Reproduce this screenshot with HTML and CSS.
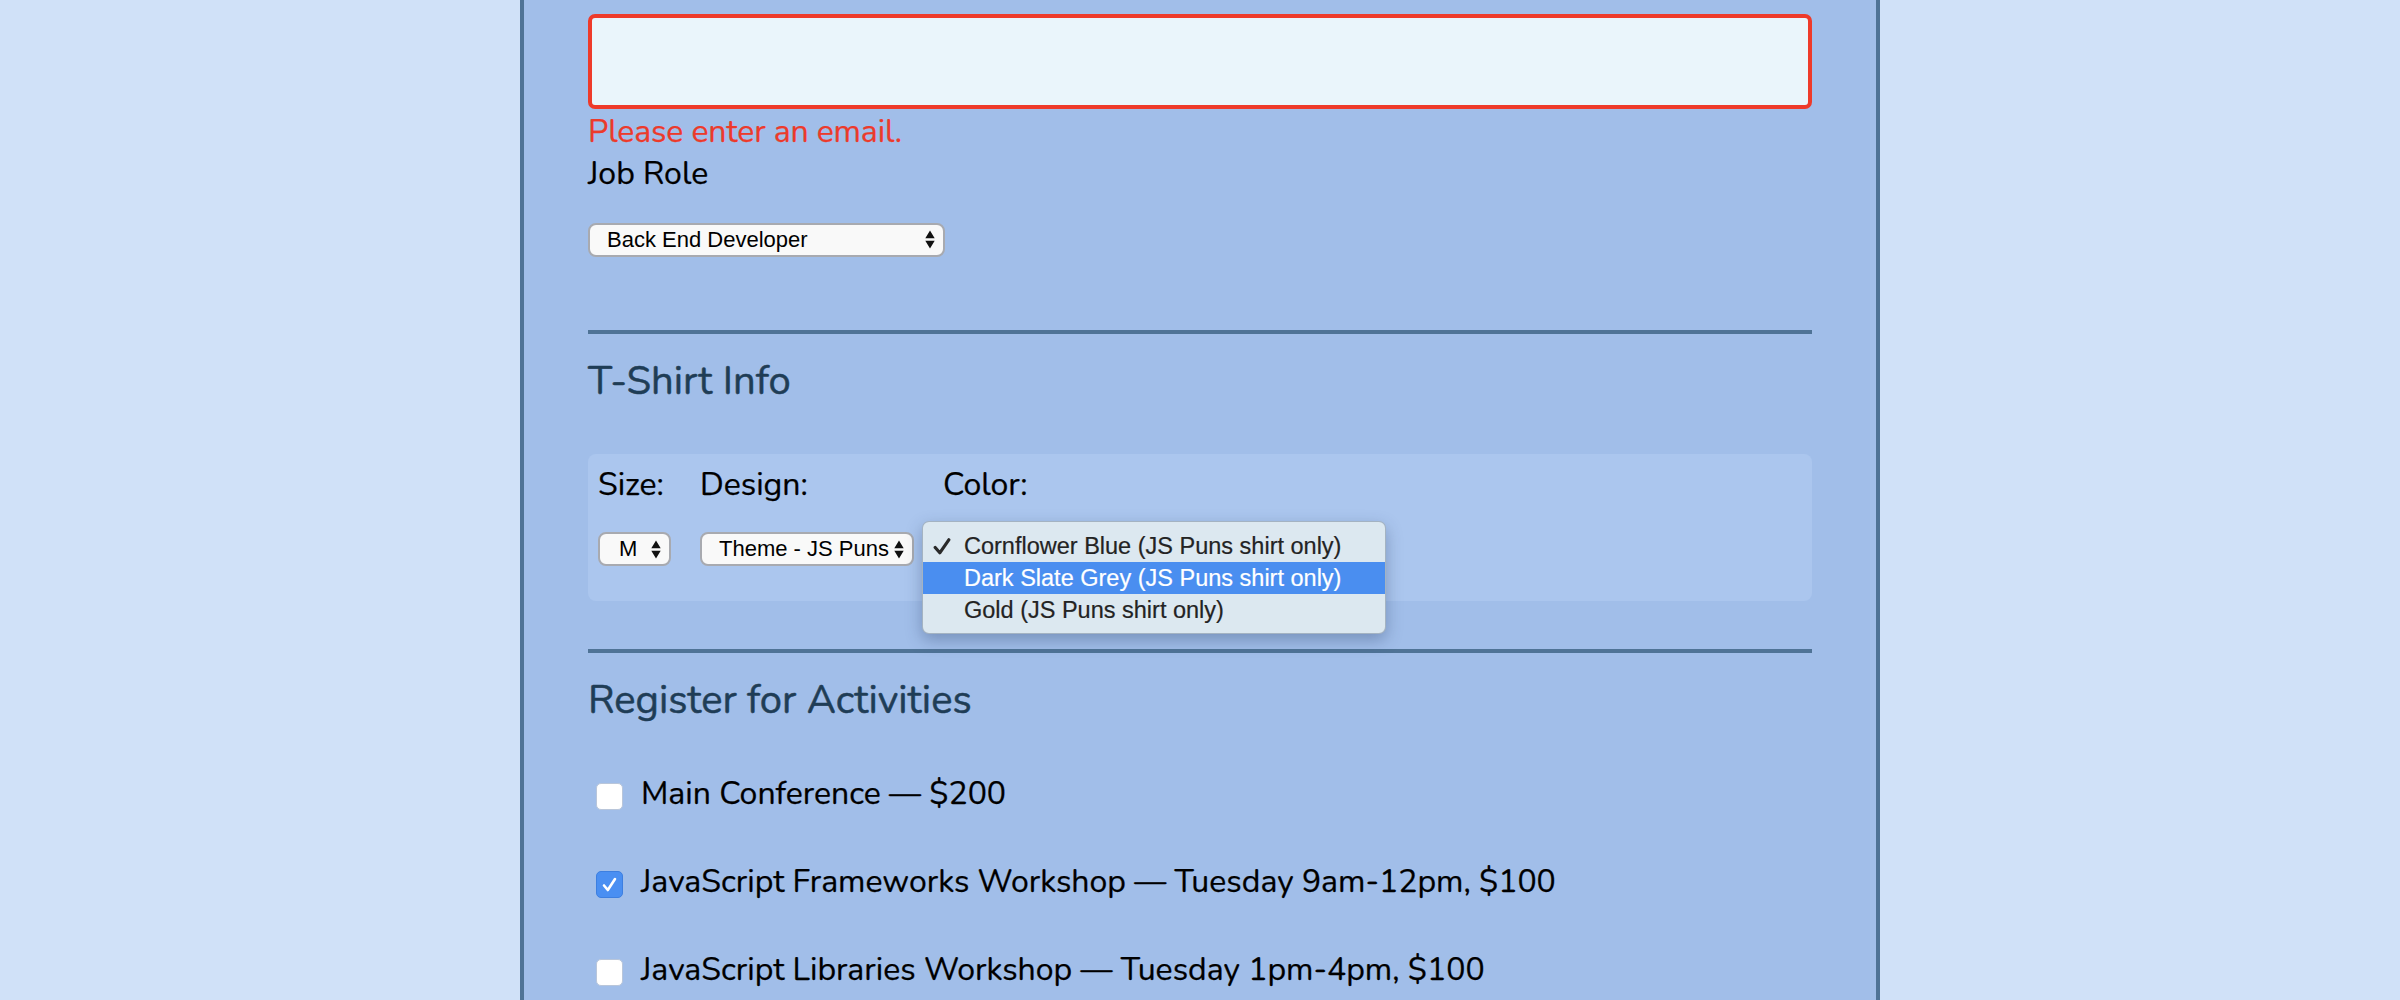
FILE: index.html
```html
<!DOCTYPE html>
<html lang="en">
<head>
<meta charset="utf-8">
<title>Registration</title>
<link rel="stylesheet" href="styles.css">
</head>
<body>
<main class="panel">
  <div class="email-input" aria-label="Email"></div>
  <p class="error">Please enter an email.</p>
  <div class="label">Job Role</div>
  <div class="select select-job">
    <span>Back End Developer</span>
    <svg class="arrows" width="10" height="19" viewBox="0 0 10 19"><path d="M0.3 8.2 L5 0.6 L9.7 8.2 Z M0.3 10.8 L5 18.4 L9.7 10.8 Z" fill="#111"/></svg>
  </div>

  <hr class="rule">
  <h2 class="heading">T-Shirt Info</h2>
  <div class="shirt-box">
    <div class="col col-size">
      <div class="label">Size:</div>
      <div class="select select-size">
        <span>M</span>
        <svg class="arrows" width="10" height="19" viewBox="0 0 10 19"><path d="M0.3 8.2 L5 0.6 L9.7 8.2 Z M0.3 10.8 L5 18.4 L9.7 10.8 Z" fill="#111"/></svg>
      </div>
    </div>
    <div class="col col-design">
      <div class="label">Design:</div>
      <div class="select select-design">
        <span>Theme - JS Puns</span>
        <svg class="arrows" width="10" height="19" viewBox="0 0 10 19"><path d="M0.3 8.2 L5 0.6 L9.7 8.2 Z M0.3 10.8 L5 18.4 L9.7 10.8 Z" fill="#111"/></svg>
      </div>
    </div>
    <div class="col col-color">
      <div class="label">Color:</div>
      <div class="color-wrap">
        <div class="select select-color"></div>
        <ul class="popup">
          <li class="opt">
            <svg class="check" width="18" height="17" viewBox="0 0 18 17"><path d="M2.2 9.5 L6.8 14.8 L15.8 1.8" fill="none" stroke="#2a2a2a" stroke-width="3.2" stroke-linecap="round" stroke-linejoin="round"/></svg>
            Cornflower Blue (JS Puns shirt only)</li>
          <li class="opt opt-hl">Dark Slate Grey (JS Puns shirt only)</li>
          <li class="opt">Gold (JS Puns shirt only)</li>
        </ul>
      </div>
    </div>
  </div>

  <hr class="rule rule-2">
  <h2 class="heading">Register for Activities</h2>
  <div class="activities">
    <div class="act">
      <span class="box"></span>
      <span>Main Conference — $200</span>
    </div>
    <div class="act">
      <span class="box box-on"><svg width="27" height="27" viewBox="0 0 27 27"><path d="M8 14.5 L11.8 19 L19 8" fill="none" stroke="#fff" stroke-width="2.6" stroke-linecap="round" stroke-linejoin="round"/></svg></span>
      <span>JavaScript Frameworks Workshop — Tuesday 9am-12pm, $100</span>
    </div>
    <div class="act">
      <span class="box"></span>
      <span>JavaScript Libraries Workshop — Tuesday 1pm-4pm, $100</span>
    </div>
  </div>
</main>
</body>
</html>
```
FILE: styles.css
```css
* { box-sizing: border-box; }

html, body {
  margin: 0;
  padding: 0;
  height: 100%;
  overflow: hidden;
}

body {
  background: #d0e1f8;
  font-family: "Nunito", Lato, "Open Sans", sans-serif;
  color: #000;
}

.panel {
  width: 1360px;
  min-height: 1000px;
  margin: 0 auto;
  background: #a1bee9;
  border-left: 4px solid #4f7396;
  border-right: 4px solid #4f7396;
  padding: 14px 64px 40px;
}

.email-input {
  height: 95px;
  width: 100%;
  background: #eaf5fb;
  border: 4px solid #ee3a2a;
  border-radius: 7px;
}

.error {
  margin: 4px 0 0;
  font-size: 32px;
  line-height: 1.2;
  color: #ec3a2b;
  letter-spacing: -0.12px;
  -webkit-text-stroke: 0.25px #ec3a2b;
}

.label {
  font-size: 32px;
  line-height: 1.2;
  color: #000;
  -webkit-text-stroke: 0.25px #000;
}

.panel > .label {
  margin-top: 4px;
}

.select {
  height: 34px;
  display: flex;
  align-items: center;
  justify-content: space-between;
  background: #f9f9f9;
  border: 2px solid #a8aab0;
  border-radius: 8px;
  padding: 0 8px 0 17px;
  font-family: "Liberation Sans", Arial, sans-serif;
  font-size: 22px;
  color: #000;
  white-space: nowrap;
}

.select-job {
  width: 357px;
  margin-top: 29px;
}

.select-size { width: 73px; margin-top: 28px; padding-left: 19px; }
.select-design { width: 214px; margin-top: 28px; }
.select-color { width: 300px; margin-top: 28px; }

.arrows { flex: none; }

.rule {
  margin: 73px 0 0;
  height: 4px;
  border: none;
  background: #4f7396;
}

.rule-2 { margin-top: 48px; }

.heading {
  margin: 23px 0 0;
  font-size: 40px;
  line-height: 48px;
  font-weight: 400;
  color: #1f3d56;
  -webkit-text-stroke: 0.5px #1f3d56;
}

.shirt-box {
  margin-top: 49px;
  background: #abc6ee;
  border-radius: 8px;
  padding: 12px 10px 35px;
  display: flex;
  gap: 29px;
}

.col-size { width: 73px; }
.col-design { width: 214px; }

.color-wrap {
  position: relative;
}

.popup {
  position: absolute;
  top: -11px;
  left: -21px;
  width: 464px;
  margin: 0;
  padding: 8px 0 7px;
  list-style: none;
  background: #dce8f0;
  border: 1px solid rgba(60, 80, 110, 0.35);
  border-radius: 7px;
  box-shadow: 0 6px 16px rgba(40, 60, 100, 0.35);
  font-family: "Liberation Sans", Arial, sans-serif;
  font-size: 23.5px;
  color: #232323;
  -webkit-text-stroke: 0.2px currentColor;
}

.opt {
  position: relative;
  height: 32px;
  line-height: 32px;
  padding-left: 41px;
  white-space: nowrap;
}

.opt-hl {
  background: #4a8ef0;
  color: #fff;
}

.check {
  position: absolute;
  left: 10px;
  top: 8px;
}

.activities {
  margin-top: 51px;
  display: flex;
  flex-direction: column;
  gap: 49.6px;
}

.act {
  display: flex;
  align-items: flex-start;
  gap: 18px;
  padding-left: 8px;
  font-size: 32px;
  line-height: 1.2;
  color: #000;
  -webkit-text-stroke: 0.25px #000;
}

.box {
  flex: none;
  width: 27px;
  height: 27px;
  margin-top: 8px;
  background: #fff;
  border: 1px solid #b9c6da;
  border-radius: 5px;
}

.box-on {
  background: #4a8ff2;
  border-color: #3d7fe0;
}

.box-on svg { display: block; margin: -1px; }
```
